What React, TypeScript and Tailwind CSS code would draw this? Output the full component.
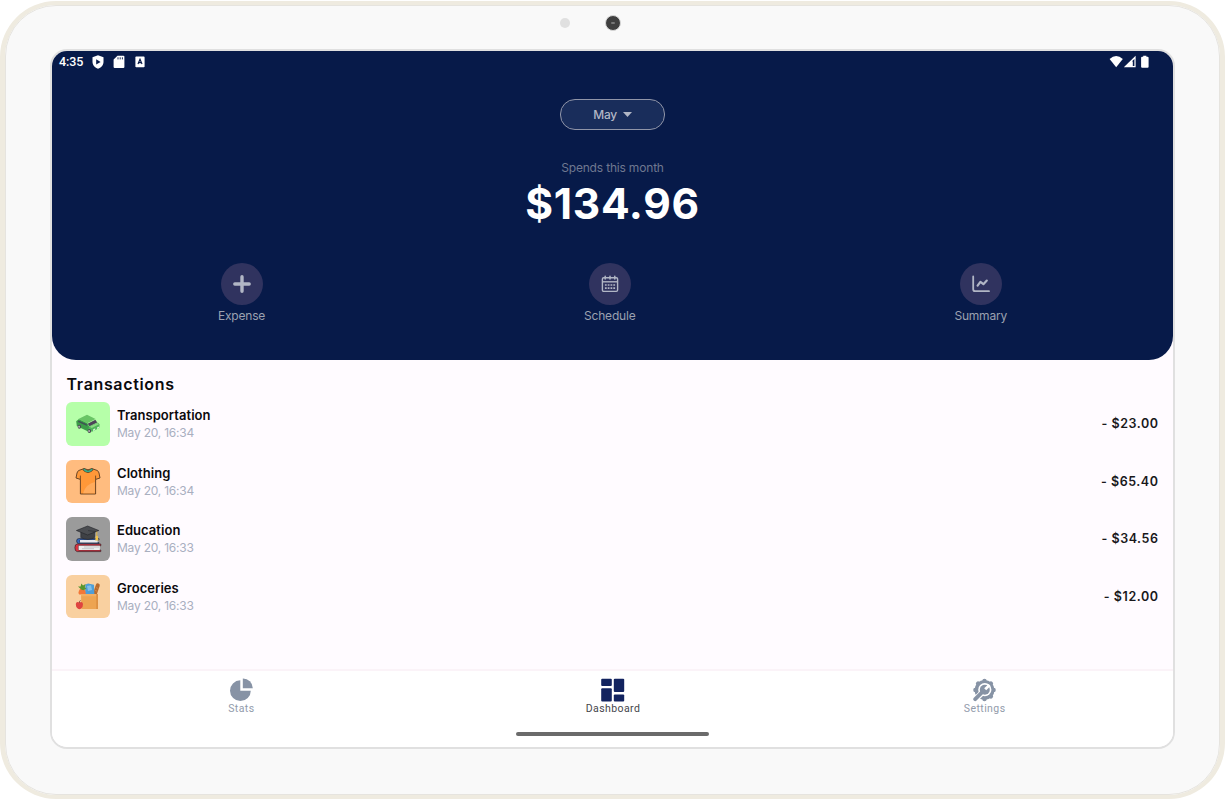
import type { ReactNode } from 'react';

function StatusBar() {
  return (
    <div className="flex h-[22px] w-full items-center justify-between pl-[7px] pr-[23px] text-white">
      <div className="flex items-center">
        <span className="w-[33px] text-[12.5px] font-medium leading-none tracking-[-0.1px] [font-family:Roboto,sans-serif]">4:35</span>
        <svg className="h-[14px] w-[12px]" viewBox="0 0 12 14">
          <path fill="#fff" d="M6 .2 11.5 2.2V6.8C11.5 10.2 9 12.8 6 13.8 3 12.8.5 10.2.5 6.8V2.2Z" />
          <path fill="#071a49" d="M4.2 4.2 8.6 6.9 4.2 9.6Z" />
        </svg>
        <svg className="ml-[9px] h-[14px] w-[12px]" viewBox="0 0 12 14">
          <path fill="#fff" d="M4.5.7H10.4Q11.4.7 11.4 1.7V12Q11.4 13 10.4 13H1.6Q.6 13 .6 12V4.6Z" />
          <path stroke="#071a49" strokeWidth=".9" d="M5 2.3V4.4M7.2 2.3V4.4M9.4 2.3V4.4" />
        </svg>
        <svg className="ml-[9px] h-[14px] w-[12px]" viewBox="0 0 12 14">
          <rect x="1.4" y="1.6" width="9.2" height="10.6" rx=".8" fill="#fff" />
          <path fill="none" stroke="#071a49" strokeWidth="1.2" d="M4 9 6 4.2 8 9M4.7 7.7H7.3" />
        </svg>
      </div>
      <div className="flex items-center">
        <svg className="h-[14px] w-[14px]" viewBox="0 0 14 14">
          <path fill="#fff" d="M.6 3.9Q7.2-1.8 13.8 3.9L7.2 12.2Z" />
        </svg>
        <svg className="h-[14px] w-[14px]" viewBox="0 0 14 14">
          <path fill="#fff" d="M.8 12.2 12.6 .8V12.2Z" />
          <path fill="#071a49" d="M9 6.2 11.4 4V11H9.8V6.4Z" />
        </svg>
        <svg className="ml-[3px] h-[14px] w-[10px]" viewBox="0 0 10 14">
          <path fill="#fff" d="M3.2.7H6.4V1.7H7.6Q8.6 1.7 8.6 2.7V11.8Q8.6 12.8 7.6 12.8H2.1Q1.1 12.8 1.1 11.8V2.7Q1.1 1.7 2.1 1.7H3.2Z" />
        </svg>
      </div>
    </div>
  );
}

function Action({ label, children }: { label: string; children: ReactNode }) {
  return (
    <div className="flex flex-col items-center">
      <div className="flex h-[42px] w-[42px] items-center justify-center rounded-full bg-[#30335f]">{children}</div>
      <span className="mt-[3px] text-[12px] leading-[16px] tracking-[-0.2px] text-[#9ba1b0]">{label}</span>
    </div>
  );
}

function PlusIcon() {
  return (
    <svg className="h-6 w-6" viewBox="0 0 24 24">
      <path stroke="#b1b6c5" strokeWidth="3.4" strokeLinecap="round" d="M12 4.8V19.2M4.8 12H19.2" />
    </svg>
  );
}

function CalendarIcon() {
  return (
    <svg className="h-6 w-6" viewBox="0 0 24 24" fill="none" stroke="#b1b6c5">
      <rect x="4.4" y="5.8" width="15.2" height="13.6" rx="1.3" strokeWidth="1.4" />
      <path strokeWidth="1.4" d="M4.4 9.8H19.6" />
      <path strokeWidth="1.5" strokeLinecap="round" d="M7.2 4.2V7M12 4.2V7M16.8 4.2V7" />
      <path strokeWidth="1.7" strokeDasharray="1.8 1" d="M6.9 13H17.1M6.9 16.2H17.1" />
    </svg>
  );
}

function ChartIcon() {
  return (
    <svg className="h-6 w-6" viewBox="0 0 24 24" fill="none" stroke="#b1b6c5" strokeLinecap="round" strokeLinejoin="round">
      <path strokeWidth="1.8" d="M4.2 4.4V17.2Q4.2 19.2 6.2 19.2H20" />
      <path strokeWidth="2.2" d="M8.6 13.6 11.4 9.8 14.4 12.2 17.8 8.6" />
    </svg>
  );
}

function CarPicture() {
  return (
    <svg className="h-[26px] w-[26px]" viewBox="0 0 26 26">
      <path fill="#3c9c49" d="M1.2 10.2 4 8 12.2 12 14.4 16 13.6 20.8 1.8 15Z" />
      <path fill="#69c565" d="M3.4 8 12 3.8 20.6 8 12.2 12.2Z" />
      <path fill="#3f5354" d="M3.4 9.4 11.6 13 12.2 15 3 11Z" />
      <path fill="#4c4558" d="M12.6 12.8 20.4 8.8 22.2 11.4 14.6 15.2Z" />
      <path fill="#4fb65a" d="M14.2 15.6 22.6 11.4 24.6 13.2 24.2 17 17 20.8 13 19.2Z" />
      <path fill="#8adb83" d="M14.6 15.7 22.2 11.9 24 13.2 16.8 17Z" />
      <path fill="#d9f3d8" d="M18 18.4 20.2 17.3V19L18 20.1ZM22 16.4 24 15.4V16.9L22 17.9Z" />
      <ellipse cx="4.4" cy="15.8" rx="1.7" ry="2" fill="#4b4852" />
      <ellipse cx="14.4" cy="20" rx="1.8" ry="2.1" fill="#4b4852" />
      <ellipse cx="4.1" cy="15.8" rx=".8" ry="1" fill="#c8c8c8" />
      <ellipse cx="14.1" cy="20" rx=".8" ry="1" fill="#c8c8c8" />
    </svg>
  );
}

function ShirtPicture() {
  return (
    <svg className="h-[28px] w-[28px]" viewBox="0 0 28 28">
      <path
        fill="#ff9838"
        stroke="#5b3a1e"
        strokeWidth=".9"
        strokeLinejoin="round"
        d="M10 1.6Q14 4 18 1.6L23 3.4Q24.5 4 25 6L26 11 21.6 12.4V27H6.4V12.4L2 11 3 6Q3.5 4 5 3.4Z"
      />
      <path fill="#ffab5c" d="M20.8 15Q12 17 9 26.2H20.8Z" />
      <path fill="none" stroke="#5b3a1e" strokeWidth=".8" d="M6.4 12.4V8.6M21.6 12.4V8.6" />
      <path fill="none" stroke="#5b3a1e" strokeWidth="2.7" d="M9.4 1.9Q14 7.3 18.6 1.9" />
      <path fill="none" stroke="#39aa8a" strokeWidth="1.6" d="M9.7 2.1Q14 6.8 18.3 2.1" />
    </svg>
  );
}

function BooksPicture() {
  return (
    <svg className="h-[28px] w-[28px]" viewBox="0 0 28 28">
      <path fill="#3567bd" stroke="#252a36" strokeWidth=".7" d="M25 13.6H4.8Q2.6 13.6 2.6 16T4.8 18.8H25V17.6H6V15H25Z" />
      <path fill="#e6e8ed" d="M6 15H23.6V17.6H6Z" />
      <path fill="#d93442" stroke="#3a2228" strokeWidth=".7" d="M26.8 19H3.2Q.9 19 .9 22.7T3.2 26.6H26.8V25H4.6V20.8H26.8Z" />
      <path fill="#eceded" d="M4.6 20.8H25.8V25H4.6Z" />
      <path stroke="#a9adb3" strokeWidth=".6" d="M10 22H25M8 23.7H20" />
      <path fill="#3f4145" stroke="#222428" strokeWidth=".6" d="M6.8 6.4V12.6Q14 16.2 20.6 12.6V6.4Z" />
      <path fill="#4b4d51" stroke="#222428" strokeWidth=".6" strokeLinejoin="round" d="M2.4 5.5 13.6 1 24.8 5.5 13.6 10Z" />
      <path fill="none" stroke="#2a2b2f" strokeWidth=".6" d="M14 5.6 22.8 6.6" />
      <path fill="none" stroke="#e8b83e" strokeWidth=".9" d="M22.8 6.6V12" />
      <path fill="#f0c34b" d="M21.8 11H23.8L24.5 15.6H21.2Z" />
    </svg>
  );
}

function GroceriesPicture() {
  return (
    <svg className="h-[28px] w-[28px]" viewBox="0 0 28 28">
      <path stroke="#ba6a2b" strokeWidth="4" strokeLinecap="round" d="M20.6 12.5 23.8 3.3" />
      <path stroke="#cf8545" strokeWidth="1" strokeLinecap="round" d="M22.1 5.6 24.2 6.4M21.1 8.4 23.2 9.2" />
      <path fill="#4f9ed7" d="M11.4 2.6 14.2 1.4 20 2.8 20.4 13H11Z" />
      <path fill="#82bee7" d="M13 4 17 3.2 18 8 14 9Z" />
      <path fill="#f37838" d="M4.4 11Q5 6.6 8 5.8 11.6 6.6 11.8 12.4H5.2Z" />
      <path fill="#58962f" d="M7.6 7.8 4 4.4 6.6 4.6 7.4 1.4 9 3.6 11.6 2 10.8 5.2 12.4 6.8 9.4 8.2Z" />
      <path fill="#eda452" d="M7 12H23.8V27H7.4Z" />
      <path fill="#f3ae62" d="M7 12H22.4V14.2H7Z" />
      <path fill="#d98a3d" d="M22.4 12H23.8V27H22.4Z" />
      <path fill="#df4440" d="M5.4 20.4Q8.6 19 9 22 9.2 25.4 6.8 26.8 5.4 27.5 4 26.8 1.6 25.4 1.8 22 2.2 19 5.4 20.4Z" />
      <path fill="none" stroke="#7b382c" strokeWidth=".9" d="M5.4 20.8Q5.4 19.2 6.4 18.4" />
    </svg>
  );
}

type Transaction = { name: string; date: string; amount: string; tile: string; picture: ReactNode };

const transactions: Transaction[] = [
  { name: 'Transportation', date: 'May 20, 16:34', amount: '- $23.00', tile: 'bg-[#b6ffa9]', picture: <CarPicture /> },
  { name: 'Clothing', date: 'May 20, 16:34', amount: '- $65.40', tile: 'bg-[#ffbc7f]', picture: <ShirtPicture /> },
  { name: 'Education', date: 'May 20, 16:33', amount: '- $34.56', tile: 'bg-[#9b9b9b]', picture: <BooksPicture /> },
  { name: 'Groceries', date: 'May 20, 16:33', amount: '- $12.00', tile: 'bg-[#f9d0a0]', picture: <GroceriesPicture /> },
];

function TransactionRow({ name, date, amount, tile, picture }: Transaction) {
  return (
    <li className="flex h-[43.5px] items-center">
      <div className={`flex h-full w-[44px] items-center justify-center rounded-[6px] ${tile}`}>{picture}</div>
      <div className="ml-[7px] flex flex-1 flex-col">
        <span className="text-[13px] font-semibold leading-[18px] tracking-[0.05px] text-[#0b0a0d]">{name}</span>
        <span className="text-[12px] leading-[17px] tracking-[-0.22px] text-[#a9afbf]">{date}</span>
      </div>
      <span className="pr-[0.5px] pt-[2px] text-[12.5px] font-semibold tracking-[0.55px] text-[#19181b]">{amount}</span>
    </li>
  );
}

function StatsIcon() {
  return (
    <svg className="h-6 w-6" viewBox="0 0 24 24" fill="#8793a5">
      <path d="M11.3 2.3V12.7H21.8A10.4 10.4 0 1 1 11.3 2.3Z" />
      <path d="M13.8.4A9.8 9.8 0 0 1 23.8 10.2H13.8Z" />
    </svg>
  );
}

function DashboardIcon() {
  return (
    <svg className="h-6 w-6" viewBox="0 0 24 24" fill="#12235f">
      <rect x=".2" y=".8" width="10.6" height="7.2" rx="1" />
      <rect x=".2" y="10.2" width="10.6" height="13.4" rx="1" />
      <rect x="12.8" y=".8" width="10.4" height="13.2" rx="1" />
      <rect x="12.8" y="16.4" width="10.4" height="7.2" rx="1" />
    </svg>
  );
}

function SettingsIcon() {
  return (
    <svg className="h-6 w-6" viewBox="0 0 24 24" fill="none">
      <g transform="translate(-.8 .3)">
        <circle cx="12.3" cy="11.7" r="10" fill="#8793a5" />
        <path
          stroke="#8793a5"
          strokeWidth="4.4"
          strokeLinecap="round"
          d="M12.3 2.6V4M12.3 19.4V20.8M3.2 11.7H4.6M20 11.7H21.4M5.9 5.3 6.9 6.3M17.7 17.1 18.7 18.1M18.7 5.3 17.7 6.3"
        />
        <circle cx="12.6" cy="11.4" r="6.6" fill="#fff" />
        <path stroke="#fff" strokeWidth="6" strokeLinecap="round" d="M11 13.2 2.4 21.8" />
        <path stroke="#8793a5" strokeWidth="3.8" strokeLinecap="round" d="M11 12.9 3 20.9" />
        <circle cx="12.6" cy="11.4" r="5" fill="#8793a5" />
        <path stroke="#fff" strokeWidth="2.8" d="M13 11 17.4 6.6" />
      </g>
    </svg>
  );
}

function Tab({ label, active, children }: { label: string; active?: boolean; children: ReactNode }) {
  return (
    <div className="flex flex-col items-center pt-[7px]">
      {children}
      <span
        className={`text-[10.5px] font-normal leading-[13px] tracking-[0.42px] [font-family:Roboto,sans-serif] ${active ? 'text-[#45464b]' : 'text-[#929bab]'}`}
      >
        {label}
      </span>
    </div>
  );
}

export default function App() {
  return (
    <div className="h-[800px] w-[1225px] overflow-hidden bg-white pt-px font-['Inter',sans-serif]">
      <div className="flex h-[798px] flex-col rounded-[56px] border-x-[5px] border-y-[4px] border-[#efebe0]">
        <div className="flex flex-1 flex-col rounded-[51px] border border-[#e6e4df] bg-[#f9f9f9] px-[44px]">
          <div className="flex h-[43px] items-center">
            <div className="mb-[9px] ml-[510px] h-[10px] w-[10px] rounded-full bg-[#e0e0e0]" />
            <div className="mb-[9px] ml-[34.5px] flex h-[16px] w-[16px] items-center justify-center rounded-full border border-[#d8d8d8] bg-[#3f3f3f]">
              <div className="h-[2px] w-[4px] rounded-full bg-[#777777]" />
            </div>
          </div>
          <main className="flex h-[700px] flex-col overflow-hidden rounded-[17px] border-2 border-[#e0e0e0] bg-[#fffbff]">
            <header className="flex h-[309px] flex-col items-center rounded-b-[24px] bg-[#071a49]">
              <StatusBar />
              <button className="mt-[26px] flex h-[31px] w-[105px] items-center justify-center rounded-[15px] border border-[#9095a8] bg-[#192d5b] text-[12px] font-medium text-[#b1b6c5]">
                <span className="tracking-[-0.4px]">May</span>
                <svg className="ml-[6px] h-[5px] w-[9px]" viewBox="0 0 9 5">
                  <path fill="#b1b6c5" d="M0 0H9L4.5 4.9Z" />
                </svg>
              </button>
              <p className="mt-[30px] text-[12px] leading-[16px] tracking-[-0.18px] text-[#6f7890]">Spends this month</p>
              <p className="mt-[3px] text-[42.5px] font-bold leading-[50px] tracking-[0.65px] text-white">$134.96</p>
              <div className="mt-[34px] flex w-full justify-between px-[166px]">
                <Action label="Expense"><PlusIcon /></Action>
                <Action label="Schedule"><CalendarIcon /></Action>
                <Action label="Summary"><ChartIcon /></Action>
              </div>
            </header>
            <section className="flex-1 px-[14px] pt-[13px]">
              <h2 className="pl-[0.5px] text-[16px] font-semibold leading-[22px] tracking-[0.65px] text-[#0b0a0d]">Transactions</h2>
              <ul className="mt-[7px] flex flex-col gap-[14px]">
                {transactions.map((item) => (
                  <TransactionRow key={item.name} {...item} />
                ))}
              </ul>
            </section>
            <nav className="flex h-[78px] flex-col items-center border-t-2 border-[#fbf3f8] bg-white">
              <div className="grid w-full grid-cols-3 pl-[3.5px] pr-[2.5px]">
                <Tab label="Stats"><StatsIcon /></Tab>
                <Tab label="Dashboard" active><DashboardIcon /></Tab>
                <Tab label="Settings"><SettingsIcon /></Tab>
              </div>
              <div className="mt-[17px] h-[4px] w-[193px] rounded-full bg-[#6b6b6b]" />
            </nav>
          </main>
        </div>
      </div>
    </div>
  );
}
